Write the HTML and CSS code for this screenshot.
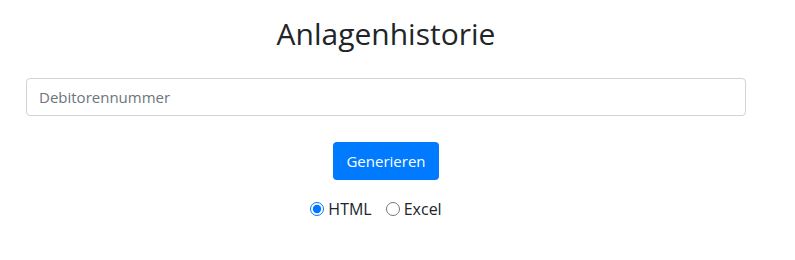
FILE: index.html
```html
<!DOCTYPE html>
<html lang="de">
<head>
  <meta charset="UTF-8">
  <title>Anlagenhistorie</title>
  <link rel="stylesheet" href="styles.css">
</head>
<body>
  <div class="container">
    <h2 class="titel">Anlagenhistorie</h2>
    <input type="text" class="form-input" placeholder="Debitorennummer">
    <div class="aktionen">
      <button class="btn-primary">Generieren</button>
      <div class="format-wahl">
        <label><input type="radio" name="format" checked> HTML</label>
        <label><input type="radio" name="format"> Excel</label>
      </div>
    </div>
  </div>
</body>
</html>
```
FILE: styles.css
```css
body {
  margin: 0;
  font-family: "Open Sans", "Noto Sans", sans-serif;
  color: #212529;
  background-color: #fff;
}

.container {
  width: 720px;
  margin-left: 26px;
  padding-top: 14px;
}

.titel {
  margin: 0 0 24px 0;
  text-align: center;
  font-weight: 400;
  font-size: 30px;
  line-height: 40px;
}

.form-input {
  display: block;
  box-sizing: border-box;
  width: 720px;
  height: 38px;
  padding: 6px 12px;
  border: 1px solid #ced4da;
  border-radius: 4px;
  font-family: inherit;
  font-size: 15px;
  color: #495057;
}

.form-input::placeholder {
  color: #6c757d;
}

.aktionen {
  display: flex;
  flex-direction: column;
  align-items: center;
  margin-top: 26px;
}

.btn-primary {
  height: 38px;
  padding: 0 13px;
  border: none;
  border-radius: 4px;
  background-color: #007bff;
  color: #fff;
  font-family: inherit;
  font-size: 15px;
  cursor: pointer;
}

.format-wahl {
  display: flex;
  gap: 14px;
  margin-top: 18px;
  margin-right: 20px;
  font-size: 16px;
}

.format-wahl label {
  display: flex;
  align-items: center;
  gap: 4px;
}

.format-wahl input {
  margin: 0;
  width: 14px;
  height: 14px;
}
```
